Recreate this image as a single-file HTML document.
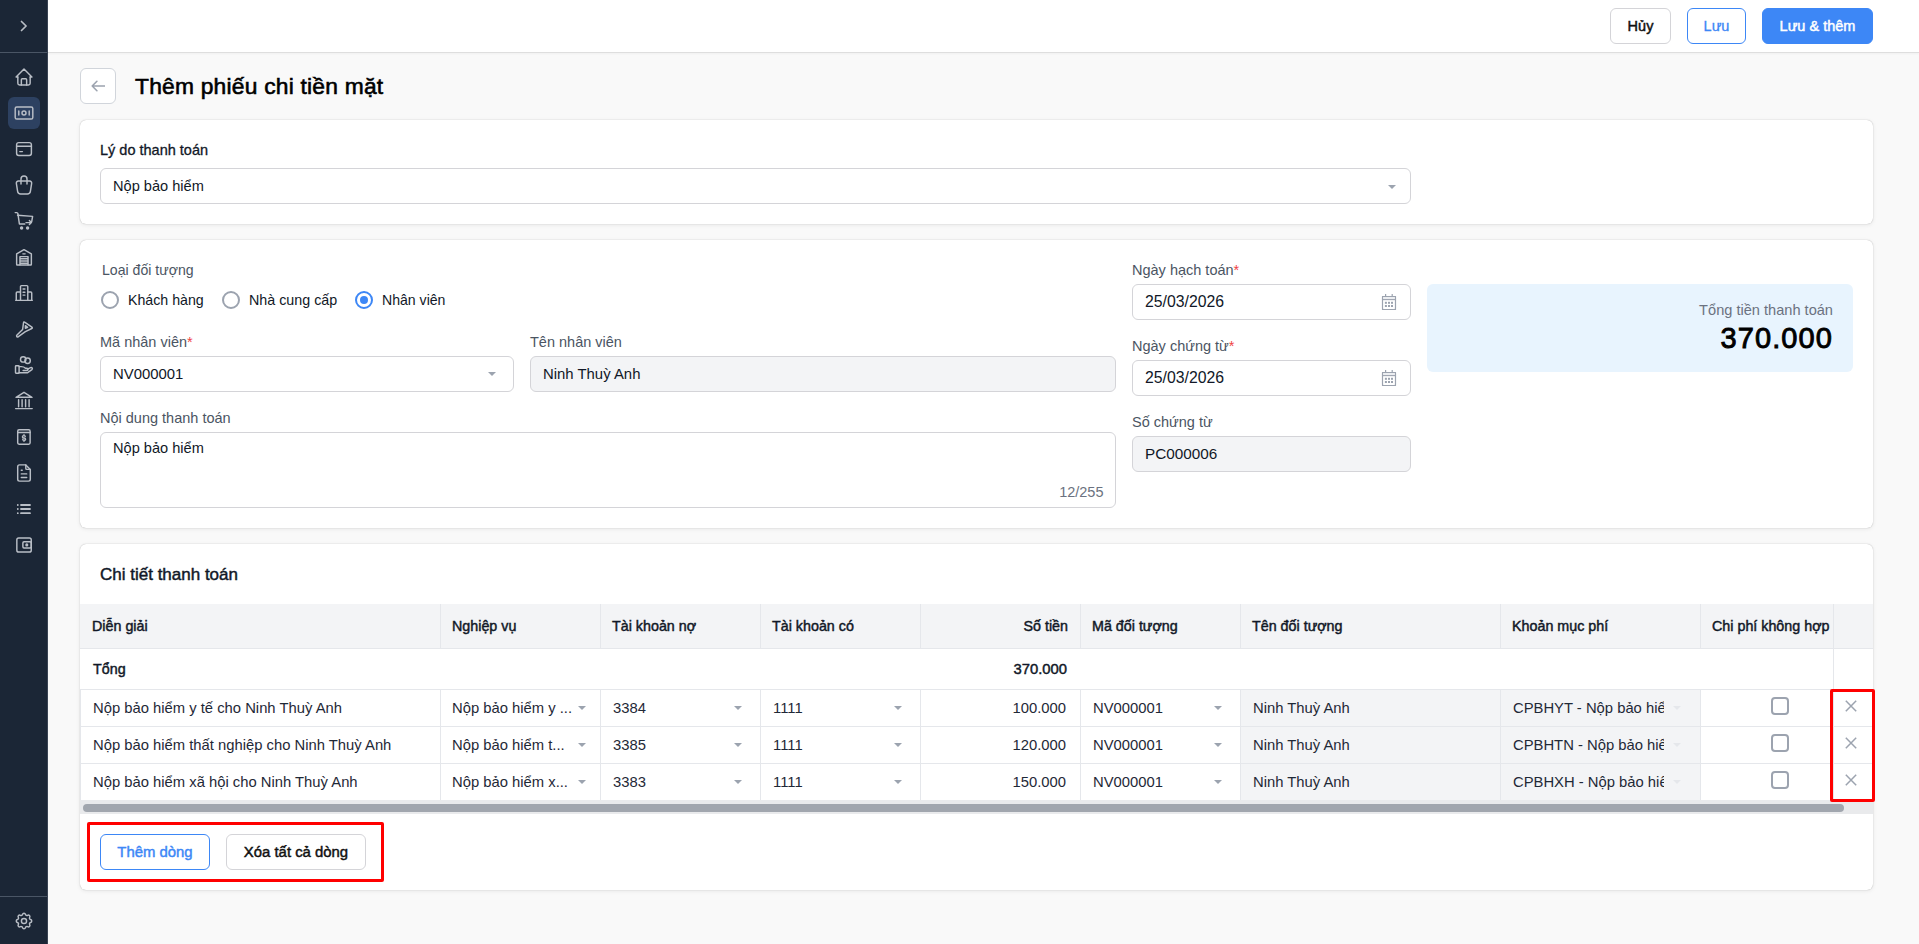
<!DOCTYPE html>
<html><head><meta charset="utf-8">
<style>
*{box-sizing:border-box;margin:0;padding:0}
html,body{width:1919px;height:944px;overflow:hidden}
body{font-family:"Liberation Sans",sans-serif;background:#f9f9f9;color:#111827;position:relative}
.a{position:absolute}
.t{position:absolute;white-space:nowrap;line-height:20px;font-size:14.2px}
.m{font-weight:400!important;-webkit-text-stroke:0.45px currentColor}
.sb{position:absolute;left:0;top:0;width:48px;height:944px;background:#1b2636;border-right:1px solid #3a4454}
.sb .ln{position:absolute;left:0;width:47px;height:1px;background:#4a5565}
.ic{position:absolute;left:15px;width:18px;height:18px}
.sic{fill:none;stroke:#b9bec6;stroke-width:1.45;stroke-linecap:round;stroke-linejoin:round}
.ic svg{display:block;width:18px;height:18px;fill:none;stroke:#c9cdd3;stroke-width:1.6;stroke-linecap:round;stroke-linejoin:round}
.hdr{position:absolute;left:48px;top:0;width:1871px;height:53px;background:#fff;border-bottom:1px solid #dedede;box-shadow:0 1px 2px rgba(0,0,0,.04)}
.btn{position:absolute;height:36px;border-radius:6px;font-size:14.5px;font-weight:400;-webkit-text-stroke:0.45px currentColor;line-height:34px;text-align:center;border:1px solid #d4d4d8;background:#fff}
.card{position:absolute;left:80px;width:1793px;background:#fff;border-radius:6px;box-shadow:0 0 1px rgba(0,0,0,.32),0 1px 4px rgba(0,0,0,.08)}
.inp{position:absolute;height:36px;border:1px solid #d4d4d8;border-radius:6px;background:#fff}
.inp.dis{background:#f3f4f6}
.inp .v{position:absolute;left:12px;top:0;line-height:34px;font-size:14.9px;white-space:nowrap;color:#111827}
.lbl{color:#4b5563;font-size:14.5px}
.req{color:#ef4444}
.caret{position:absolute;width:0;height:0;border-left:4px solid transparent;border-right:4px solid transparent;border-top:4px solid #9ca3af}
.radio{position:absolute;width:18px;height:18px;border-radius:50%;border:2px solid #9ca3af;background:#fff}
.th{position:absolute;top:604px;height:45px;background:#f3f4f6}
.vl{position:absolute;width:1px;background:#e5e7eb}
.hl{position:absolute;height:1px;background:#e5e7eb}
.cell{position:absolute;font-size:14.8px;white-space:nowrap;line-height:20px;color:#1f2937}
.hd{position:absolute;font-size:14.3px;font-weight:400;-webkit-text-stroke:0.45px currentColor;white-space:nowrap;line-height:20px;top:616px}
.chk{position:absolute;width:18px;height:18px;border:2px solid #9ca3af;border-radius:4px;background:#fff;left:1771px}
.x{position:absolute;left:1845px;width:12px;height:12px}
.red{position:absolute;border:3px solid #ff0000;border-radius:2px}
</style></head><body>

<!-- SIDEBAR -->
<div class="sb">
  <div class="ln" style="top:52px"></div>
  <div class="ln" style="top:896px"></div>
</div>
<!-- ICONS -->
<div class="a" style="left:8px;top:97px;width:32px;height:32px;border-radius:6px;background:#2d4161"></div>
<svg class="a sic" style="left:12px;top:14px" width="24" height="24" viewBox="0 0 24 24"><path d="M9.5 7.5l4.6 4.5-4.6 4.5" stroke-width="1.7"/></svg>
<svg class="a sic" style="left:12px;top:64.5px" width="24" height="24" viewBox="0 0 24 24"><g transform="translate(12 12) scale(0.88) translate(-12 -12)" stroke-width="1.65"><path d="M5 12H3l9-9 9 9h-2"/><path d="M5 12v7a2 2 0 0 0 2 2h10a2 2 0 0 0 2-2v-7"/><path d="M9 21v-6a1 1 0 0 1 1-1h4a1 1 0 0 1 1 1v6"/></g></svg>
<svg class="a sic" style="left:12px;top:101px" width="24" height="24" viewBox="0 0 24 24" style="stroke:#f3f4f6"><rect x="3.2" y="6" width="17.6" height="12" rx="1.6"/><circle cx="12" cy="12" r="2"/><path d="M6.8 10v4M17.2 10v4"/></svg>
<svg class="a sic" style="left:12px;top:137px" width="24" height="24" viewBox="0 0 24 24"><rect x="4.6" y="5.6" width="14.8" height="12.8" rx="2.2"/><path d="M4.6 9.3h14.8M7.8 14.6h2.6"/></svg>
<svg class="a sic" style="left:12px;top:173px" width="24" height="24" viewBox="0 0 24 24"><path d="M6.331 8h11.339a2 2 0 0 1 1.977 2.304l-1.255 8.152a3 3 0 0 1-2.966 2.544h-6.852a3 3 0 0 1-2.965-2.544l-1.255-8.152A2 2 0 0 1 6.331 8z"/><path d="M9 11V6a3 3 0 0 1 6 0v5"/></svg>
<svg class="a sic" style="left:12px;top:209px" width="24" height="24" viewBox="0 0 24 24"><path d="M3.2 3.6h1.6c.6 0 1 .4 1.1 1L7.4 15h5.4"/><path d="M5.6 6.2l15 1.2-.9 5.2"/><path d="M14 13.6h5.3M17.4 11.6l2 2-2 2"/><circle cx="9.6" cy="19" r="1" fill="#b9bec6"/><circle cx="15.6" cy="19" r="1" fill="#b9bec6"/></svg>
<svg class="a sic" style="left:12px;top:245px" width="24" height="24" viewBox="0 0 24 24"><g transform="translate(12 12) scale(0.92) translate(-12 -12)" stroke-width="1.58"><path d="M4 20V8.6L12 4l8 4.6V20a.8.8 0 0 1-.8.8H4.8A.8.8 0 0 1 4 20z"/><path d="M10.8 8.6h2.4"/><path d="M7.6 20.5v-8.9h8.8v8.9M7.6 14h8.8M7.6 16.4h8.8M7.6 18.7h8.8"/></g></svg>
<svg class="a sic" style="left:12px;top:281px" width="24" height="24" viewBox="0 0 24 24"><g transform="translate(12 12) scale(0.92) translate(-12 -12)" stroke-width="1.58"><path d="M3 20h18"/><path d="M8.2 20V5a1 1 0 0 1 1-1h5.9a1 1 0 0 1 1 1v15"/><path d="M8.2 11H4.6a1 1 0 0 0-1 1v8M16.1 11h3.3a1 1 0 0 1 1 1v8"/><path d="M11 7.7h2M11 11.1h2M11 14.3h2"/></g></svg>
<svg class="a sic" style="left:12px;top:317px" width="24" height="24" viewBox="0 0 24 24"><path d="M12.6 5.1L19.9 10.1Q20.8 10.9 19.8 11.5L13.4 14.7L6.4 19.6Q5.3 20.4 4.7 19.5Q4.3 18.8 5 18.1L10.6 12.6L11.5 5.8Q11.8 4.5 12.6 5.1Z"/><path d="M13.4 8.7L15.6 10.3 13.4 11.3Z"/></svg>
<svg class="a sic" style="left:12px;top:353px" width="24" height="24" viewBox="0 0 24 24"><circle cx="11.2" cy="6.4" r="2.7"/><circle cx="15.6" cy="7.7" r="2.7"/><rect x="3.5" y="12.8" width="3.6" height="7.4" rx=".6"/><path d="M7.1 13.6h2.2c1.8 0 3.3.7 4.2 1.7h1.4a1.1 1.1 0 0 1 0 2.2h-3.8"/><path d="M7.1 19.8h8.2l4.6-3.2a1.2 1.2 0 0 0-1.3-2l-3.2 1.6"/></svg>
<svg class="a sic" style="left:12px;top:389px" width="24" height="24" viewBox="0 0 24 24"><path d="M3.6 19.6h16.6"/><path d="M4 8.3L12 3.3l8 5z"/><path d="M6.6 10.8v7M10.1 10.8v7M13.6 10.8v7M17.1 10.8v7"/></svg>
<svg class="a sic" style="left:12px;top:425px" width="24" height="24" viewBox="0 0 24 24"><g transform="translate(12 12) scale(0.9) translate(-12 -12)" stroke-width="1.61"><rect x="5" y="4" width="13.8" height="16" rx="1.5"/><path d="M5 7h13.8"/><path d="M13.4 11.3a1.5 1.3 0 0 0-1.4-.8h-.4a1.3 1.3 0 0 0 0 2.6h.8a1.3 1.3 0 0 1 0 2.6h-.4a1.5 1.3 0 0 1-1.4-.8M12 9.5v1M12 15.7v1"/></g></svg>
<svg class="a sic" style="left:12px;top:461px" width="24" height="24" viewBox="0 0 24 24"><g transform="translate(12 12) scale(0.9) translate(-12 -12)" stroke-width="1.61"><path d="M14 3v4a1 1 0 0 0 1 1h4"/><path d="M17 21H7a2 2 0 0 1-2-2V5a2 2 0 0 1 2-2h7l5 5v11a2 2 0 0 1-2 2z"/><path d="M9 9h1M9 13h6M9 17h6"/></g></svg>
<svg class="a sic" style="left:12px;top:497px" width="24" height="24" viewBox="0 0 24 24"><path d="M9 8h9M9 12h9M9 16.2h9M5.8 8v.01M5.8 12v.01M5.8 16.2v.01" stroke-width="1.8"/></svg>
<svg class="a sic" style="left:12px;top:533px" width="24" height="24" viewBox="0 0 24 24"><g transform="translate(12 12) scale(0.93) translate(-12 -12)" stroke-width="1.56"><rect x="4.3" y="4.4" width="15.5" height="15.2" rx="2"/><rect x="10.8" y="8.6" width="9" height="6.6" rx="1.2"/><circle cx="15" cy="11.9" r=".9" fill="#b9bec6"/></g></svg>
<svg class="a sic" style="left:12px;top:909px" width="24" height="24" viewBox="0 0 24 24"><g transform="translate(12 12) scale(0.86) translate(-12 -12)" stroke-width="1.69"><path d="M10.325 4.317c.426-1.756 2.924-1.756 3.35 0a1.724 1.724 0 0 0 2.573 1.066c1.543-.94 3.31.826 2.37 2.37a1.724 1.724 0 0 0 1.065 2.572c1.756.426 1.756 2.924 0 3.35a1.724 1.724 0 0 0-1.066 2.573c.94 1.543-.826 3.31-2.37 2.37a1.724 1.724 0 0 0-2.572 1.065c-.426 1.756-2.924 1.756-3.35 0a1.724 1.724 0 0 0-2.573-1.066c-1.543.94-3.31-.826-2.37-2.37a1.724 1.724 0 0 0-1.065-2.572c-1.756-.426-1.756-2.924 0-3.35a1.724 1.724 0 0 0 1.066-2.573c-.94-1.543.826-3.31 2.37-2.37 1 .608 2.296.07 2.572-1.065z"/><path d="M9 12a3 3 0 1 0 6 0 3 3 0 0 0-6 0"/></g></svg>
<!-- /ICONS -->

<!-- HEADER -->
<div class="hdr"></div>
<div class="btn" style="left:1610px;top:8px;width:61px;color:#111">Hủy</div>
<div class="btn" style="left:1687px;top:8px;width:59px;color:#3d87f6;border-color:#3d87f6;font-size:14.5px;-webkit-text-stroke-width:0.3px">Lưu</div>
<div class="btn" style="left:1762px;top:8px;width:111px;color:#fff;background:#3d87f6;border-color:#3d87f6">Lưu &amp; thêm</div>

<!-- TITLE -->
<div class="a" style="left:80px;top:68px;width:36px;height:36px;border:1px solid #d1d5db;border-radius:6px;background:#fff"></div>
<svg class="a" style="left:91px;top:80px" width="14" height="12" viewBox="0 0 14 12"><path d="M13.9 6H1.2M5.9 1.3 1.2 6l4.7 4.7" fill="none" stroke="#9ca3af" stroke-width="1.6" stroke-linecap="round" stroke-linejoin="round"/></svg>
<div class="t m" style="left:135px;top:72px;font-size:22.8px;letter-spacing:0.22px;line-height:28px;color:#000;-webkit-text-stroke-width:0.6px">Thêm phiếu chi tiền mặt</div>

<!-- CARD 1 -->
<div class="card" style="top:120px;height:104px"></div>
<div class="t m" style="left:100px;top:140px;font-size:14.5px;-webkit-text-stroke-width:0.3px">Lý do thanh toán</div>
<div class="inp" style="left:100px;top:168px;width:1311px"><span class="v" style="font-size:14.6px">Nộp bảo hiểm</span><div class="caret" style="right:14px;top:16px"></div></div>

<!-- CARD 2 -->
<div class="card" style="top:240px;height:288px"></div>
<div class="t lbl" style="left:102px;top:260px;font-size:14.1px">Loại đối tượng</div>
<div class="radio" style="left:101px;top:291px"></div>
<div class="t" style="left:128px;top:290px;font-size:14.2px">Khách hàng</div>
<div class="radio" style="left:222px;top:291px"></div>
<div class="t" style="left:249px;top:290px;font-size:14.3px">Nhà cung cấp</div>
<div class="radio" style="left:355px;top:291px;border-color:#3d87f6"><div class="a" style="left:3px;top:3px;width:8px;height:8px;border-radius:50%;background:#3d87f6"></div></div>
<div class="t" style="left:382px;top:290px;font-size:14.1px">Nhân viên</div>

<div class="t lbl" style="left:100px;top:332px">Mã nhân viên<span class="req">*</span></div>
<div class="inp" style="left:100px;top:356px;width:414px"><span class="v">NV000001</span><div class="caret" style="right:17px;top:15px"></div></div>
<div class="t lbl" style="left:530px;top:332px">Tên nhân viên</div>
<div class="inp dis" style="left:530px;top:356px;width:586px"><span class="v">Ninh Thuỳ Anh</span></div>

<div class="t lbl" style="left:100px;top:408px">Nội dung thanh toán</div>
<div class="inp" style="left:100px;top:432px;width:1016px;height:76px"><span class="v" style="top:5px;line-height:20px;font-size:14.6px">Nộp bảo hiểm</span></div>
<div class="t" style="right:815.5px;top:482px;color:#6b7280;font-size:14.5px">12/255</div>

<div class="t lbl" style="left:1132px;top:260px">Ngày hạch toán<span class="req">*</span></div>
<div class="inp" style="left:1132px;top:284px;width:279px"><span class="v" style="font-size:15.8px">25/03/2026</span></div>
<div class="t lbl" style="left:1132px;top:336px">Ngày chứng từ<span class="req">*</span></div>
<div class="inp" style="left:1132px;top:360px;width:279px"><span class="v" style="font-size:15.8px">25/03/2026</span></div>
<div class="t lbl" style="left:1132px;top:412px">Số chứng từ</div>
<div class="inp dis" style="left:1132px;top:436px;width:279px"><span class="v" style="font-size:15.3px">PC000006</span></div>

<div class="a" style="left:1427px;top:284px;width:426px;height:88px;background:#e8f4fe;border-radius:6px"></div>
<div class="t" style="left:1600px;width:233px;text-align:right;top:300px;color:#6b7280;font-size:14.6px">Tổng tiền thanh toán</div>
<div class="t" style="left:1600px;width:233px;text-align:right;top:321px;font-size:29px;line-height:34px;font-weight:400;-webkit-text-stroke:0.9px #000;letter-spacing:1.1px;margin-right:-1.1px;color:#000">370.000</div>

<svg class="a" style="left:1381px;top:293px" width="16" height="18" viewBox="0 0 16 18"><rect x="1.5" y="3.5" width="13" height="13" rx="1" fill="none" stroke="#9ca3af" stroke-width="1.1"/><rect x="1.5" y="3.5" width="13" height="3" fill="#eceef1"/><path d="M1.5 6.6h13" stroke="#9ca3af" stroke-width="1.1"/><path d="M1.5 3.5h13v13h-13z" fill="none" stroke="#9ca3af" stroke-width="1.1"/><path d="M4.6 1v2.5M11.2 1v2.5" stroke="#9ca3af" stroke-width="1.2"/><g fill="#9ca3af"><rect x="3.9" y="8.8" width="2" height="2"/><rect x="7" y="8.8" width="2" height="2"/><rect x="10" y="8.8" width="2" height="2"/><rect x="3.9" y="12" width="2" height="2"/><rect x="7" y="12" width="2" height="2"/><rect x="10" y="12" width="2" height="2"/></g></svg>
<svg class="a" style="left:1381px;top:369px" width="16" height="18" viewBox="0 0 16 18"><rect x="1.5" y="3.5" width="13" height="13" rx="1" fill="none" stroke="#9ca3af" stroke-width="1.1"/><rect x="1.5" y="3.5" width="13" height="3" fill="#eceef1"/><path d="M1.5 6.6h13" stroke="#9ca3af" stroke-width="1.1"/><path d="M1.5 3.5h13v13h-13z" fill="none" stroke="#9ca3af" stroke-width="1.1"/><path d="M4.6 1v2.5M11.2 1v2.5" stroke="#9ca3af" stroke-width="1.2"/><g fill="#9ca3af"><rect x="3.9" y="8.8" width="2" height="2"/><rect x="7" y="8.8" width="2" height="2"/><rect x="10" y="8.8" width="2" height="2"/><rect x="3.9" y="12" width="2" height="2"/><rect x="7" y="12" width="2" height="2"/><rect x="10" y="12" width="2" height="2"/></g></svg>
<!-- CARD 3 -->
<div class="card" style="top:544px;height:346px"></div>
<div class="t m" style="left:100px;top:565px;font-size:17px">Chi tiết thanh toán</div>

<div class="th" style="left:80px;width:1793px"></div>
<!-- TABLE -->
<div class="vl" style="left:440px;top:604px;height:45px"></div>
<div class="vl" style="left:600px;top:604px;height:45px"></div>
<div class="vl" style="left:760px;top:604px;height:45px"></div>
<div class="vl" style="left:920px;top:604px;height:45px"></div>
<div class="vl" style="left:1080px;top:604px;height:45px"></div>
<div class="vl" style="left:1240px;top:604px;height:45px"></div>
<div class="vl" style="left:1500px;top:604px;height:45px"></div>
<div class="vl" style="left:1700px;top:604px;height:45px"></div>
<div class="vl" style="left:1833px;top:604px;height:45px"></div>
<div class="hl" style="left:80px;top:648px;width:1793px"></div>
<div class="hd" style="left:92px">Diễn giải</div>
<div class="hd" style="left:452px">Nghiệp vụ</div>
<div class="hd" style="left:612px">Tài khoản nợ</div>
<div class="hd" style="left:772px">Tài khoản có</div>
<div class="hd" style="right:851px">Số tiền</div>
<div class="hd" style="left:1092px">Mã đối tượng</div>
<div class="hd" style="left:1252px">Tên đối tượng</div>
<div class="hd" style="left:1512px">Khoản mục phí</div>
<div class="a" style="left:1712px;top:604px;width:121px;height:44px;overflow:hidden"><div class="hd" style="left:0;top:12px">Chi phí không hợp lệ</div></div>
<div class="hd" style="left:93px;top:659px;font-size:14.3px">Tổng</div>
<div class="hd" style="right:852px;top:659px;font-size:14.8px">370.000</div>
<div class="vl" style="left:1833px;top:649px;height:40px"></div>
<div class="hl" style="left:80px;top:689px;width:1793px"></div>
<div class="a" style="left:1241px;top:690px;width:459px;height:36px;background:#f3f4f6"></div>
<div class="cell" style="left:93px;top:698px">Nộp bảo hiểm y tế cho Ninh Thuỳ Anh</div>
<div class="cell" style="left:452px;top:698px">Nộp bảo hiểm y ...</div>
<div class="caret" style="left:577.5px;top:706px;border-width:4px 4px 0 4px"></div>
<div class="cell" style="left:613px;top:698px">3384</div>
<div class="caret" style="left:733.5px;top:706px;border-width:4px 4px 0 4px"></div>
<div class="cell" style="left:773px;top:698px">1111</div>
<div class="caret" style="left:893.5px;top:706px;border-width:4px 4px 0 4px"></div>
<div class="cell" style="right:853px;top:698px">100.000</div>
<div class="cell" style="left:1093px;top:698px">NV000001</div>
<div class="caret" style="left:1213.5px;top:706px;border-width:4px 4px 0 4px"></div>
<div class="cell" style="left:1253px;top:698px">Ninh Thuỳ Anh</div>
<div class="a" style="left:1513px;top:690px;width:151px;height:36px;overflow:hidden"><div class="cell" style="left:0;top:8px">CPBHYT - Nộp bảo hiểm y tế</div></div>
<div class="caret" style="left:1673px;top:706px;border-width:4px 4px 0 4px;border-top-color:#e5e7eb"></div>
<div class="chk" style="top:697px"></div>
<svg class="x" style="top:700px" viewBox="0 0 12 12"><path d="M.8 .8l10.4 10.4M11.2 .8 .8 11.2" stroke="#9ca3af" stroke-width="1.5" fill="none"/></svg>
<div class="vl" style="left:80px;top:690px;height:36px"></div>
<div class="vl" style="left:440px;top:690px;height:36px"></div>
<div class="vl" style="left:600px;top:690px;height:36px"></div>
<div class="vl" style="left:760px;top:690px;height:36px"></div>
<div class="vl" style="left:920px;top:690px;height:36px"></div>
<div class="vl" style="left:1080px;top:690px;height:36px"></div>
<div class="vl" style="left:1240px;top:690px;height:36px"></div>
<div class="vl" style="left:1500px;top:690px;height:36px"></div>
<div class="vl" style="left:1700px;top:690px;height:36px"></div>
<div class="vl" style="left:1833px;top:690px;height:36px"></div>
<div class="hl" style="left:80px;top:726px;width:1793px"></div>
<div class="a" style="left:1241px;top:727px;width:459px;height:36px;background:#f3f4f6"></div>
<div class="cell" style="left:93px;top:735px">Nộp bảo hiểm thất nghiệp cho Ninh Thuỳ Anh</div>
<div class="cell" style="left:452px;top:735px">Nộp bảo hiểm t...</div>
<div class="caret" style="left:577.5px;top:743px;border-width:4px 4px 0 4px"></div>
<div class="cell" style="left:613px;top:735px">3385</div>
<div class="caret" style="left:733.5px;top:743px;border-width:4px 4px 0 4px"></div>
<div class="cell" style="left:773px;top:735px">1111</div>
<div class="caret" style="left:893.5px;top:743px;border-width:4px 4px 0 4px"></div>
<div class="cell" style="right:853px;top:735px">120.000</div>
<div class="cell" style="left:1093px;top:735px">NV000001</div>
<div class="caret" style="left:1213.5px;top:743px;border-width:4px 4px 0 4px"></div>
<div class="cell" style="left:1253px;top:735px">Ninh Thuỳ Anh</div>
<div class="a" style="left:1513px;top:727px;width:151px;height:36px;overflow:hidden"><div class="cell" style="left:0;top:8px">CPBHTN - Nộp bảo hiểm thất nghiệp</div></div>
<div class="caret" style="left:1673px;top:743px;border-width:4px 4px 0 4px;border-top-color:#e5e7eb"></div>
<div class="chk" style="top:734px"></div>
<svg class="x" style="top:737px" viewBox="0 0 12 12"><path d="M.8 .8l10.4 10.4M11.2 .8 .8 11.2" stroke="#9ca3af" stroke-width="1.5" fill="none"/></svg>
<div class="vl" style="left:80px;top:727px;height:36px"></div>
<div class="vl" style="left:440px;top:727px;height:36px"></div>
<div class="vl" style="left:600px;top:727px;height:36px"></div>
<div class="vl" style="left:760px;top:727px;height:36px"></div>
<div class="vl" style="left:920px;top:727px;height:36px"></div>
<div class="vl" style="left:1080px;top:727px;height:36px"></div>
<div class="vl" style="left:1240px;top:727px;height:36px"></div>
<div class="vl" style="left:1500px;top:727px;height:36px"></div>
<div class="vl" style="left:1700px;top:727px;height:36px"></div>
<div class="vl" style="left:1833px;top:727px;height:36px"></div>
<div class="hl" style="left:80px;top:763px;width:1793px"></div>
<div class="a" style="left:1241px;top:764px;width:459px;height:36px;background:#f3f4f6"></div>
<div class="cell" style="left:93px;top:772px">Nộp bảo hiểm xã hội cho Ninh Thuỳ Anh</div>
<div class="cell" style="left:452px;top:772px">Nộp bảo hiểm x...</div>
<div class="caret" style="left:577.5px;top:780px;border-width:4px 4px 0 4px"></div>
<div class="cell" style="left:613px;top:772px">3383</div>
<div class="caret" style="left:733.5px;top:780px;border-width:4px 4px 0 4px"></div>
<div class="cell" style="left:773px;top:772px">1111</div>
<div class="caret" style="left:893.5px;top:780px;border-width:4px 4px 0 4px"></div>
<div class="cell" style="right:853px;top:772px">150.000</div>
<div class="cell" style="left:1093px;top:772px">NV000001</div>
<div class="caret" style="left:1213.5px;top:780px;border-width:4px 4px 0 4px"></div>
<div class="cell" style="left:1253px;top:772px">Ninh Thuỳ Anh</div>
<div class="a" style="left:1513px;top:764px;width:151px;height:36px;overflow:hidden"><div class="cell" style="left:0;top:8px">CPBHXH - Nộp bảo hiểm xã hội</div></div>
<div class="caret" style="left:1673px;top:780px;border-width:4px 4px 0 4px;border-top-color:#e5e7eb"></div>
<div class="chk" style="top:771px"></div>
<svg class="x" style="top:774px" viewBox="0 0 12 12"><path d="M.8 .8l10.4 10.4M11.2 .8 .8 11.2" stroke="#9ca3af" stroke-width="1.5" fill="none"/></svg>
<div class="vl" style="left:80px;top:764px;height:36px"></div>
<div class="vl" style="left:440px;top:764px;height:36px"></div>
<div class="vl" style="left:600px;top:764px;height:36px"></div>
<div class="vl" style="left:760px;top:764px;height:36px"></div>
<div class="vl" style="left:920px;top:764px;height:36px"></div>
<div class="vl" style="left:1080px;top:764px;height:36px"></div>
<div class="vl" style="left:1240px;top:764px;height:36px"></div>
<div class="vl" style="left:1500px;top:764px;height:36px"></div>
<div class="vl" style="left:1700px;top:764px;height:36px"></div>
<div class="vl" style="left:1833px;top:764px;height:36px"></div>
<!-- /TABLE -->

<!-- scroll -->
<div class="a" style="left:80px;top:800px;width:1793px;height:14px;background:#e9eaec"></div>
<div class="a" style="left:83px;top:804px;width:1761px;height:8px;border-radius:4px;background:#a1a6ae"></div>

<!-- buttons -->
<div class="btn" style="left:100px;top:834px;width:110px;color:#3d87f6;border-color:#3d87f6;font-size:14.9px">Thêm dòng</div>
<div class="btn" style="left:226px;top:834px;width:140px;color:#111;font-size:14.9px">Xóa tất cả dòng</div>
<div class="red" style="left:87px;top:822px;width:297px;height:60px"></div>
<div class="red" style="left:1830px;top:689px;width:45px;height:113px"></div>

</body></html>
